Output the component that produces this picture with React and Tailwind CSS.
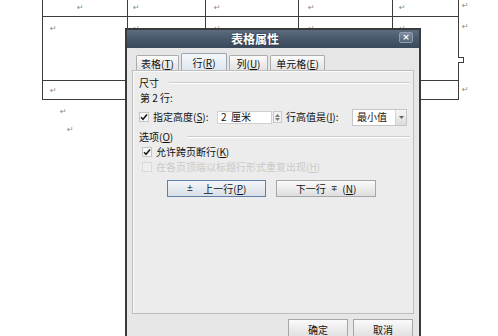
import React from 'react';

const Mark = ({ className = '' }) => (
  <span className={`block font-['DejaVu_Sans',sans-serif] text-[8px] leading-none text-[#8a8a8a] ${className}`}>↵</span>
);

const Check = ({ disabled }) => (
  <span
    className={`flex h-[10px] w-[10px] items-center justify-center border ${
      disabled ? 'border-[#dadada] bg-[#eeeeee]' : 'border-[#c4c4c4] bg-[#f7f7f7]'
    }`}
  >
    {!disabled && (
      <svg width="8" height="8" viewBox="0 0 8 8">
        <path d="M1 4.2 L3 6.2 L7 1.5" fill="none" stroke="#1c1c1c" strokeWidth="1.6" />
      </svg>
    )}
  </span>
);

const Section = ({ label, lineClass }) => (
  <div className="flex items-center">
    <span>{label}</span>
    <span className={`h-[2px] flex-1 border-t border-b border-t-[#cdcdcd] border-b-white ${lineClass}`} />
  </div>
);

const Tab = ({ children, active, width }) => (
  <div
    className={`flex items-center justify-center rounded-t-[2px] border border-b-0 ${width} ${
      active
        ? 'h-[17px] border-[#9aa6b4] bg-linear-to-b from-[#f4f8fc] to-[#dfe7f0]'
        : 'h-[15px] border-[#acacac] bg-linear-to-b from-[#fbfbfb] to-[#e2e2e2]'
    }`}
  >
    {children}
  </div>
);

const Btn = ({ children, width, focus }) => (
  <div
    className={`flex h-[17px] items-center justify-center border ${width} ${
      focus
        ? 'border-[#5e7fa8] bg-linear-to-b from-[#f4f7fa] to-[#d9dfe6]'
        : 'border-[#a6a6a6] bg-linear-to-b from-[#fafafa] to-[#dedede]'
    }`}
  >
    {children}
  </div>
);

export default function App() {
  const line = 'border-[#3c3c3c]';
  return (
    <div className="relative h-[336px] w-[498px] overflow-hidden bg-white font-['Noto_Sans_CJK_SC',sans-serif] text-[10px] text-[#111]">
      {/* document table behind the dialog */}
      <div className="flex pl-[42px]">
        <div className={`w-[417px] border-x border-b ${line}`}>
          <div className={`flex h-[17px] border-b ${line}`}>
            <div className={`w-[85px] border-r pl-[34px] pt-[4px] ${line}`}><Mark /></div>
            <div className={`w-[78px] border-r pl-[5px] pt-[4px] ${line}`}><Mark /></div>
            <div className={`w-[93px] border-r pl-[8px] pt-[4px] ${line}`}><Mark /></div>
            <div className={`w-[94px] border-r pl-[9px] pt-[4px] ${line}`}><Mark /></div>
            <div className="w-[65px] pl-[6px] pt-[4px]"><Mark /></div>
          </div>
          <div className={`flex h-[64px] border-b ${line}`}>
            <div className={`w-[85px] border-r pl-[7px] pt-[8px] ${line}`}><Mark /></div>
            <div className={`w-[78px] border-r pl-[5px] pt-[8px] ${line}`}><Mark /></div>
            <div className={`w-[93px] border-r pl-[8px] pt-[8px] ${line}`}><Mark /></div>
            <div className={`w-[94px] border-r pl-[9px] pt-[8px] ${line}`}><Mark /></div>
            <div className="w-[65px] pl-[6px] pt-[8px]"><Mark /></div>
          </div>
          <div className="flex h-[18px]">
            <div className={`w-[85px] border-r pl-[7px] pt-[6px] ${line}`}><Mark /></div>
            <div className={`w-[78px] border-r ${line}`} />
            <div className={`w-[93px] border-r ${line}`} />
            <div className={`w-[94px] border-r ${line}`} />
            <div className="w-[65px]" />
          </div>
        </div>
        <div className="flex w-[12px] flex-col">
          <div className="h-[17px] pl-[3px] pt-[2px]"><Mark /></div>
          <div className="relative h-[64px] pl-[3px] pt-[6px]">
            <Mark />
            <span className={`absolute left-[-1px] top-[40px] h-[6px] w-[6px] border border-l-0 ${line} bg-white`} />
          </div>
          <div className="h-[18px] pl-[3px] pt-[5px]"><Mark /></div>
        </div>
      </div>
      <div className="pl-[60px] pt-[8px]"><Mark /></div>
      <div className="pl-[67px] pt-[10px]"><Mark /></div>

      {/* 表格属性 dialog */}
      <div className="absolute left-[125px] top-[28px] flex h-[330px] w-[296px] flex-col border-2 border-[#3a3a3a] bg-[#e6e6e6]">
        <div className="relative flex h-[18px] items-center bg-linear-to-b from-[#5d6c80] via-[#485769] to-[#3a485b] pl-[104px]">
          <span className="text-[12px] font-bold leading-none text-white [text-shadow:0_0_2px_#1d2633]">表格属性</span>
          <div className="absolute right-[6px] top-[2px] flex h-[11px] w-[14px] items-center justify-center rounded-[2px] border border-[#8d9cb0] bg-linear-to-b from-[#7d8ca0] to-[#56667b] font-['DejaVu_Sans',sans-serif] text-[9px] font-bold leading-none text-white">
            ×
          </div>
        </div>

        <div className="flex h-[22px] items-end gap-[2px] pl-[9px]">
          <Tab width="w-[43px]">表格(<u>T</u>)</Tab>
          <Tab width="w-[46px]" active>行(<u>R</u>)</Tab>
          <Tab width="w-[39px]">列(<u>U</u>)</Tab>
          <Tab width="w-[55px]">单元格(<u>E</u>)</Tab>
        </div>

        <div className="mx-[5px] flex h-[244px] flex-col border border-[#bdbdbd] bg-[#ececec] pl-[6px] pr-[3px] leading-[12px] shadow-[inset_1px_1px_0_#fafafa]">
          <div className="mt-[6px]">
            <Section label="尺寸" lineClass="ml-[10px]" />
          </div>
          <div className="mt-[3px] pl-[1px]">第 2 行:</div>

          <div className="mt-[4px] flex h-[18px] items-center">
            <Check />
            <span className="ml-[4px] w-[64px]">指定高度(<u>S</u>):</span>
            <div className="flex h-[13px] w-[55px] items-center border border-[#d0d0d0] bg-white pl-[3px]">2&nbsp;&nbsp;厘米</div>
            <div className="ml-[1px] flex h-[12px] w-[9px] flex-col items-center justify-center gap-[1px] border border-[#c9c9c9] bg-[#f2f2f2]">
              <svg width="5" height="3" viewBox="0 0 5 3"><path d="M0 3 L2.5 0 L5 3Z" fill="#7a7a7a" /></svg>
              <svg width="5" height="3" viewBox="0 0 5 3"><path d="M0 0 L2.5 3 L5 0Z" fill="#7a7a7a" /></svg>
            </div>
            <span className="ml-[4px] w-[66px]">行高值是(<u>I</u>):</span>
            <div className="flex h-[17px] border border-[#c6c6c6] bg-white">
              <span className="flex w-[42px] items-center pl-[4px]">最小值</span>
              <span className="flex w-[11px] items-center justify-center border-l border-[#d4d4d4] bg-linear-to-b from-[#f6f6f6] to-[#dcdcdc]">
                <svg width="5" height="3" viewBox="0 0 5 3"><path d="M0 0 L2.5 3 L5 0Z" fill="#666" /></svg>
              </span>
            </div>
          </div>

          <div className="mt-[5px]">
            <Section label={<>选项(<u>O</u>)</>} lineClass="ml-[14px]" />
          </div>
          <div className="mt-[3px] flex items-center pl-[3px]">
            <Check />
            <span className="ml-[4px]">允许跨页断行(<u>K</u>)</span>
          </div>
          <div className="mt-[3px] flex items-center pl-[3px] text-[#cacaca]">
            <Check disabled />
            <span className="ml-[4px]">在各页顶端以标题行形式重复出现(<u>H</u>)</span>
          </div>

          <div className="mt-[7px] flex gap-[10px] pl-[28px]">
            <Btn width="w-[99px]" focus>
              <span className="mr-[10px] font-['DejaVu_Sans',sans-serif] text-[8px]">±</span>上一行(<u>P</u>)
            </Btn>
            <Btn width="w-[100px]">
              下一行<span className="mx-[5px] font-['DejaVu_Sans',sans-serif] text-[8px]">∓</span>(<u>N</u>)
            </Btn>
          </div>
        </div>

        <div className="mt-[5px] flex justify-end gap-[5px] pr-[6px]">
          <div className="flex h-[20px] w-[60px] items-center justify-center border border-[#a6a6a6] bg-linear-to-b from-[#fafafa] to-[#dedede]">确定</div>
          <div className="flex h-[20px] w-[60px] items-center justify-center border border-[#a6a6a6] bg-linear-to-b from-[#fafafa] to-[#dedede]">取消</div>
        </div>
      </div>
    </div>
  );
}
